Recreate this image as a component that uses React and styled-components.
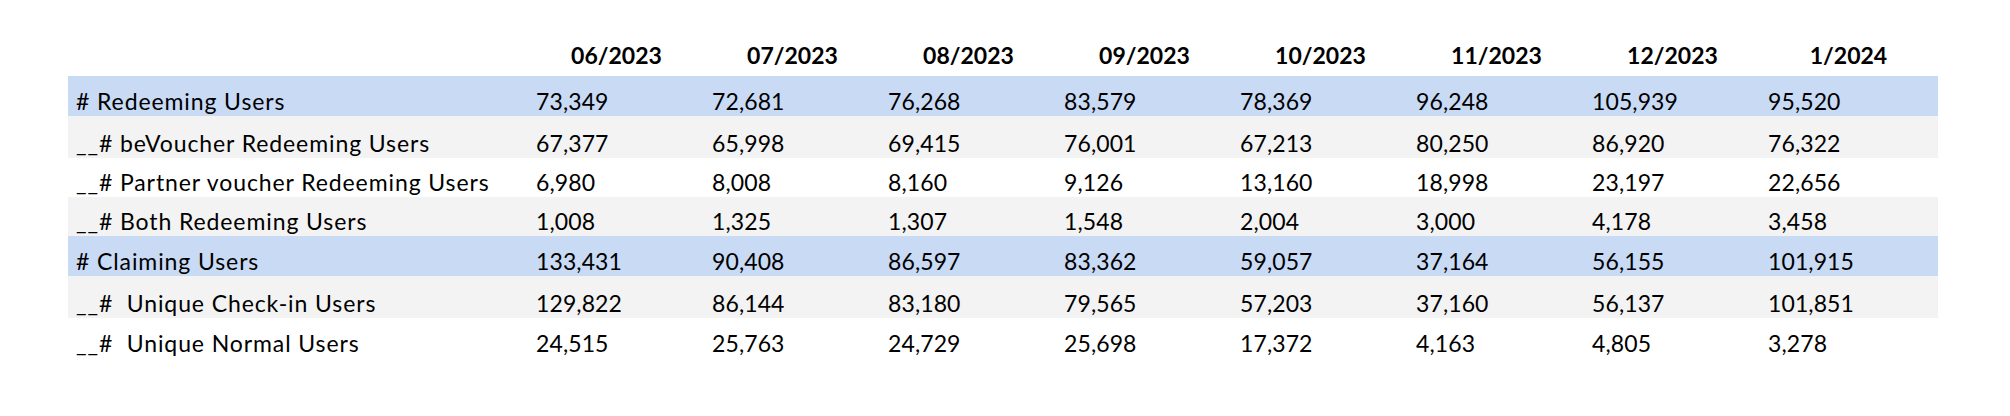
import styled, { createGlobalStyle } from "styled-components";

const MONTHS = [
  "06/2023",
  "07/2023",
  "08/2023",
  "09/2023",
  "10/2023",
  "11/2023",
  "12/2023",
  "1/2024",
];

const ROWS = [
  {
    label: "# Redeeming Users",
    tone: "blue",
    values: ["73,349", "72,681", "76,268", "83,579", "78,369", "96,248", "105,939", "95,520"],
  },
  {
    label: "__# beVoucher Redeeming Users",
    tone: "grey",
    values: ["67,377", "65,998", "69,415", "76,001", "67,213", "80,250", "86,920", "76,322"],
  },
  {
    label: "__# Partner voucher Redeeming Users",
    tone: "white",
    values: ["6,980", "8,008", "8,160", "9,126", "13,160", "18,998", "23,197", "22,656"],
  },
  {
    label: "__# Both Redeeming Users",
    tone: "grey",
    values: ["1,008", "1,325", "1,307", "1,548", "2,004", "3,000", "4,178", "3,458"],
  },
  {
    label: "# Claiming Users",
    tone: "blue",
    values: ["133,431", "90,408", "86,597", "83,362", "59,057", "37,164", "56,155", "101,915"],
  },
  {
    label: "__#  Unique Check-in Users",
    tone: "grey",
    values: ["129,822", "86,144", "83,180", "79,565", "57,203", "37,160", "56,137", "101,851"],
  },
  {
    label: "__#  Unique Normal Users",
    tone: "white",
    values: ["24,515", "25,763", "24,729", "25,698", "17,372", "4,163", "4,805", "3,278"],
  },
];

const TONES = {
  blue: "#c9daf5",
  grey: "#f3f3f3",
  white: "#ffffff",
};

// row heights in the sheet are not all the same
const HEIGHTS = [40, 41.5, 39, 39.5, 40, 41.5, 40];

const GlobalStyle = createGlobalStyle`
  html, body {
    margin: 0;
    background: #ffffff;
  }
  body {
    font-family: Lato, "Open Sans", "Liberation Sans", sans-serif;
    color: #000000;
  }
`;

const Page = styled.div`
  width: 2010px;
  height: 416px;
  padding-left: 68px;
  box-sizing: border-box;
`;

const Grid = styled.div`
  display: grid;
  grid-template-columns: 468px repeat(7, 176px) 170px;
  width: 1870px;
`;

const Row = styled.div`
  display: contents;
`;

const HeaderCell = styled.div`
  height: 76px;
  width: 161px;
  display: flex;
  align-items: flex-end;
  justify-content: center;
  padding-bottom: 9px;
  box-sizing: border-box;
  font-weight: 700;
  font-size: 23px;
  line-height: 23px;
`;

const Cell = styled.div`
  height: ${(p) => p.$h}px;
  background: ${(p) => TONES[p.$tone]};
  display: flex;
  align-items: flex-end;
  padding-bottom: 3px;
  padding-left: ${(p) => (p.$label ? "8px" : "0")};
  box-sizing: border-box;
  font-size: 23px;
  line-height: 23px;
  letter-spacing: ${(p) => (p.$label ? "0.9px" : "0.1px")};
  white-space: pre;
`;

export default function App() {
  return (
    <>
      <GlobalStyle />
      <Page>
        <Grid>
          <Row>
            <div />
            {MONTHS.map((m) => (
              <HeaderCell key={m}>{m}</HeaderCell>
            ))}
          </Row>
          {ROWS.map((row, i) => (
            <Row key={row.label}>
              <Cell $tone={row.tone} $h={HEIGHTS[i]} $label>
                {row.label}
              </Cell>
              {row.values.map((v, j) => (
                <Cell key={j} $tone={row.tone} $h={HEIGHTS[i]}>
                  {v}
                </Cell>
              ))}
            </Row>
          ))}
        </Grid>
      </Page>
    </>
  );
}
